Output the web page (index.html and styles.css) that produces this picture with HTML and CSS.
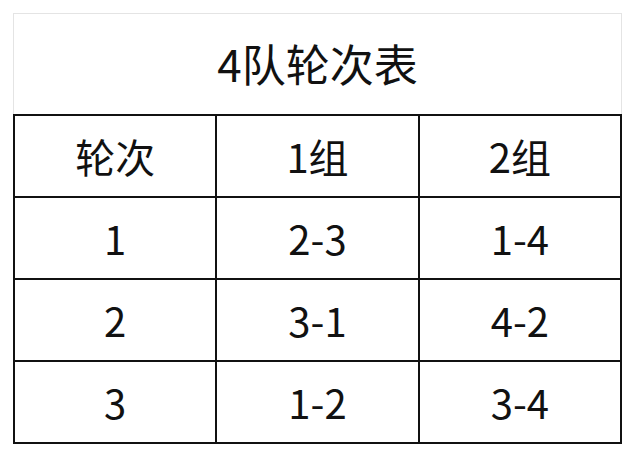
FILE: index.html
```html
<!DOCTYPE html>
<html lang="zh">
<head>
<meta charset="utf-8">
<link rel="stylesheet" href="styles.css">
</head>
<body>
<div class="sheet">
  <div class="title">4队轮次表</div>
  <table class="grid">
    <tr><td>轮次</td><td>1组</td><td>2组</td></tr>
    <tr><td>1</td><td>2-3</td><td>1-4</td></tr>
    <tr><td>2</td><td>3-1</td><td>4-2</td></tr>
    <tr><td>3</td><td>1-2</td><td>3-4</td></tr>
  </table>
</div>
</body>
</html>
```
FILE: styles.css
```css
html, body {
  margin: 0;
  padding: 0;
  background: #fff;
}
.sheet {
  margin: 13px 0 0 13px;
  width: 609px;
  font-family: "Noto Sans CJK SC", "Noto Sans", sans-serif;
  color: #111;
}
.title {
  box-sizing: border-box;
  height: 101px;
  border: 1px solid #e4e4e4;
  border-bottom: none;
  display: flex;
  align-items: center;
  justify-content: center;
  font-size: 44px;
  padding-bottom: 2px;
}
.grid {
  width: 609px;
  border-collapse: collapse;
  table-layout: fixed;
}
.grid td {
  border: 2px solid #111;
  height: 80px;
  padding: 0;
  text-align: center;
  vertical-align: middle;
  font-size: 40px;
  line-height: 1;
}
```
